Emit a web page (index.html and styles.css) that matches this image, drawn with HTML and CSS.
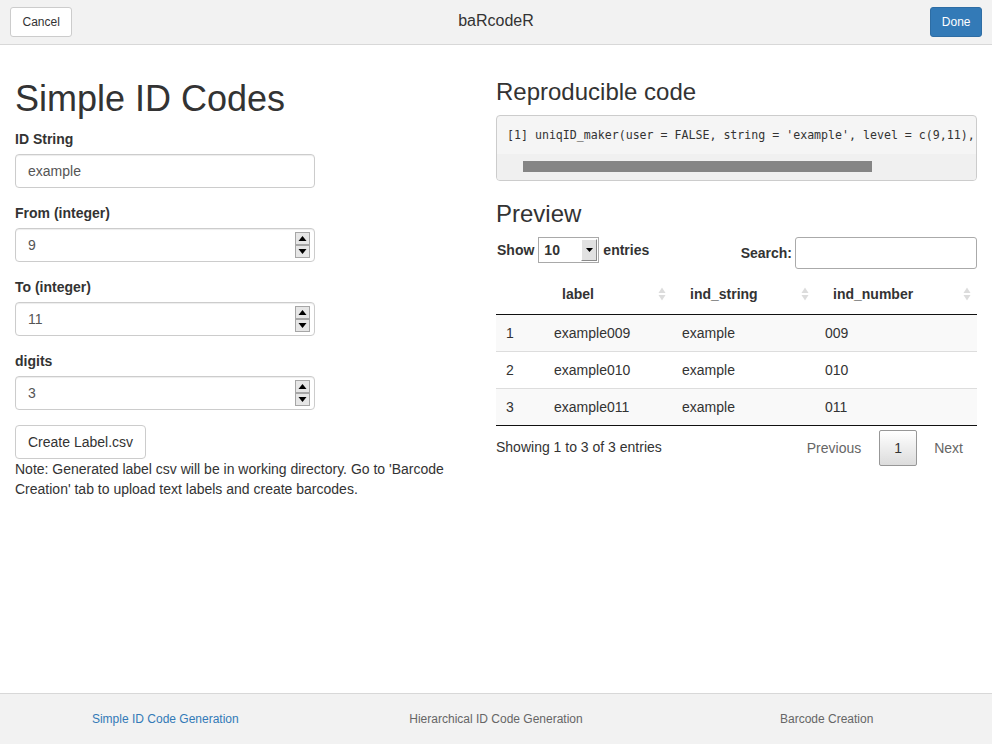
FILE: index.html
```html
<!DOCTYPE html>
<html>
<head>
<meta charset="utf-8">
<link rel="stylesheet" href="styles.css">
</head>
<body>
<div class="titlebar">
  <button class="btn btn-cancel">Cancel</button>
  <div class="title">baRcodeR</div>
  <button class="btn btn-done">Done</button>
</div>
<div class="content">
  <div class="left">
    <h1>Simple ID Codes</h1>
    <div class="form-group">
      <label class="lbl">ID String</label>
      <div class="input-wrap"><div class="input">example</div></div>
    </div>
    <div class="form-group">
      <label class="lbl">From (integer)</label>
      <div class="input-wrap"><div class="input">9</div>
        <svg class="spinner" width="15" height="26" viewBox="0 0 15 26"><rect x="0.5" y="0.5" width="14" height="12" fill="#e6e6e6" stroke="#a6a6a6"/><rect x="0.5" y="13.5" width="14" height="12" fill="#e6e6e6" stroke="#a6a6a6"/><polygon points="3.5,9 11.5,9 7.5,4" fill="#000"/><polygon points="3.5,17 11.5,17 7.5,22" fill="#000"/></svg>
      </div>
    </div>
    <div class="form-group">
      <label class="lbl">To (integer)</label>
      <div class="input-wrap"><div class="input">11</div>
        <svg class="spinner" width="15" height="26" viewBox="0 0 15 26"><rect x="0.5" y="0.5" width="14" height="12" fill="#e6e6e6" stroke="#a6a6a6"/><rect x="0.5" y="13.5" width="14" height="12" fill="#e6e6e6" stroke="#a6a6a6"/><polygon points="3.5,9 11.5,9 7.5,4" fill="#000"/><polygon points="3.5,17 11.5,17 7.5,22" fill="#000"/></svg>
      </div>
    </div>
    <div class="form-group">
      <label class="lbl">digits</label>
      <div class="input-wrap"><div class="input">3</div>
        <svg class="spinner" width="15" height="26" viewBox="0 0 15 26"><rect x="0.5" y="0.5" width="14" height="12" fill="#e6e6e6" stroke="#a6a6a6"/><rect x="0.5" y="13.5" width="14" height="12" fill="#e6e6e6" stroke="#a6a6a6"/><polygon points="3.5,9 11.5,9 7.5,4" fill="#000"/><polygon points="3.5,17 11.5,17 7.5,22" fill="#000"/></svg>
      </div>
    </div>
    <button class="btn btn-default">Create Label.csv</button>
    <div class="note">Note: Generated label csv will be in working directory. Go to 'Barcode Creation' tab to upload text labels and create barcodes.</div>
  </div>
  <div class="right">
    <h3 class="h3-first">Reproducible code</h3>
    <div class="pre">
      <div class="code-line">[1] uniqID_maker(user = FALSE, string = 'example', level = c(9,11),</div>
      <div class="hscroll"><div class="thumb"></div></div>
    </div>
    <h3 class="h3-preview">Preview</h3>
    <div class="dt-top">
      <div class="dt-length">Show <span class="select"><span class="select-val">10</span><span class="select-btn"><svg width="7" height="4" viewBox="0 0 7 4"><polygon points="0,0 7,0 3.5,4" fill="#000"/></svg></span></span> entries</div>
      <div class="dt-filter">Search:<span class="search"></span></div>
    </div>
    <table class="dt">
      <colgroup><col class="c0"><col class="c1"><col class="c2"><col class="c3"></colgroup>
      <thead>
        <tr>
          <th class="idx"></th>
          <th>label<svg class="sort" width="8" height="14" viewBox="0 0 8 14"><polygon points="0.5,6 7.5,6 4,0.5" fill="#dcdcdc"/><polygon points="0.5,8 7.5,8 4,13.5" fill="#dcdcdc"/></svg></th>
          <th>ind_string<svg class="sort" width="8" height="14" viewBox="0 0 8 14"><polygon points="0.5,6 7.5,6 4,0.5" fill="#dcdcdc"/><polygon points="0.5,8 7.5,8 4,13.5" fill="#dcdcdc"/></svg></th>
          <th>ind_number<svg class="sort" width="8" height="14" viewBox="0 0 8 14"><polygon points="0.5,6 7.5,6 4,0.5" fill="#dcdcdc"/><polygon points="0.5,8 7.5,8 4,13.5" fill="#dcdcdc"/></svg></th>
        </tr>
      </thead>
      <tbody>
        <tr class="odd"><td>1</td><td>example009</td><td>example</td><td>009</td></tr>
        <tr><td>2</td><td>example010</td><td>example</td><td>010</td></tr>
        <tr class="odd"><td>3</td><td>example011</td><td>example</td><td>011</td></tr>
      </tbody>
    </table>
    <div class="dt-bottom">
      <div class="dt-info">Showing 1 to 3 of 3 entries</div>
      <div class="dt-paginate">
        <span class="pg disabled">Previous</span>
        <span class="pg current">1</span>
        <span class="pg disabled pg-next">Next</span>
      </div>
    </div>
  </div>
</div>
<div class="tabstrip">
  <div class="tab active">Simple ID Code Generation</div>
  <div class="tab">Hierarchical ID Code Generation</div>
  <div class="tab">Barcode Creation</div>
</div>
</body>
</html>
```

FILE: styles.css
```css
* { box-sizing: border-box; }
html, body { margin: 0; padding: 0; }
body {
  width: 992px;
  height: 744px;
  overflow: hidden;
  font-family: "Liberation Sans", Arial, sans-serif;
  font-size: 14px;
  line-height: 20px;
  color: #333;
  background: #fff;
  display: flex;
  flex-direction: column;
}
.titlebar {
  height: 45px;
  flex: none;
  background: #f2f2f2;
  border-bottom: 1px solid #d8d8d8;
  display: flex;
  align-items: flex-start;
  justify-content: space-between;
  padding: 7px 10px 0 10px;
  position: relative;
}
.title {
  position: absolute;
  left: 0;
  right: 0;
  top: 11px;
  text-align: center;
  font-size: 16px;
  line-height: 20px;
  color: #333;
  pointer-events: none;
}
.btn {
  font-family: inherit;
  border: 1px solid #ccc;
  border-radius: 3px;
  background: #fff;
  color: #333;
  cursor: pointer;
  margin: 0;
}
.btn-cancel, .btn-done {
  font-size: 12px;
  line-height: 18px;
  padding: 5px 10px;
  height: 30px;
  position: relative;
  z-index: 1;
}
.btn-cancel { padding: 5px 11.5px; }
.btn-done {
  background: #337ab7;
  border-color: #2e6da4;
  color: #fff;
  padding: 5px 10.5px;
}
.content {
  flex: 1;
  display: grid;
  grid-template-columns: 481px 481px;
  padding: 14px 15px 0 15px;
}
h1 {
  font-size: 36px;
  font-weight: normal;
  line-height: 39.6px;
  margin: 20px 0 10px 0;
  color: #333;
}
h3 {
  font-size: 24px;
  font-weight: normal;
  line-height: 26.4px;
  margin: 0;
  color: #333;
}
.h3-first { margin: 20px 0 10px 0; }
.h3-preview { margin: 20px 0 10px 0; }
.form-group { margin-bottom: 15px; }
.lbl {
  display: block;
  font-weight: bold;
  margin-bottom: 5px;
}
.input-wrap {
  position: relative;
  width: 300px;
}
.input {
  height: 34px;
  padding: 6px 12px;
  border: 1px solid #ccc;
  border-radius: 4px;
  color: #555;
  background: #fff;
  box-shadow: inset 0 1px 1px rgba(0,0,0,0.075);
}
.spinner {
  position: absolute;
  right: 5px;
  top: 4px;
  display: block;
}
.btn-default {
  font-size: 14px;
  line-height: 20px;
  padding: 6px 12px;
  height: 34px;
  border-radius: 4px;
}
.note { width: 466px; }

.pre {
  border: 1px solid #ccc;
  border-radius: 4px;
  background: #f5f5f5;
  overflow: hidden;
}
.code-line {
  padding: 9.5px 10px;
  white-space: pre;
  overflow: hidden;
  font-family: "DejaVu Sans Mono", "Liberation Mono", monospace;
  font-size: 11.6px;
  line-height: 18.6px;
  color: #333;
}
.hscroll {
  height: 26px;
  background: #f0f0f0;
  padding: 7px 0 0 26px;
}
.thumb {
  width: 349px;
  height: 11px;
  background: #858585;
}
.dt-top {
  height: 37px;
  display: flex;
  justify-content: space-between;
  align-items: flex-start;
  padding-top: 0;
  font-weight: bold;
}
.dt-length {
  display: flex;
  align-items: center;
  height: 26px;
  padding-left: 1px;
  gap: 4px;
}
.select {
  display: inline-flex;
  width: 61px;
  height: 26px;
  border: 1px solid #a9a9a9;
  background: #fff;
  justify-content: space-between;
  align-items: stretch;
}
.select-val { padding: 2px 0 0 5px; line-height: 20px; }
.select-btn {
  width: 16px;
  margin: 1px;
  background: #e1e1e1;
  border-top: 1px solid #fff;
  border-left: 1px solid #fff;
  border-right: 1px solid #8a8a8a;
  border-bottom: 1px solid #8a8a8a;
  display: flex;
  align-items: center;
  justify-content: center;
}
.select-btn svg { display: block; }
.dt-filter {
  display: flex;
  align-items: center;
  height: 32px;
}
.search {
  display: block;
  width: 182px;
  height: 32px;
  margin-left: 3px;
  border: 1px solid #aaa;
  border-radius: 3px;
  background: #fff;
}
table.dt {
  width: 481px;
  border-collapse: collapse;
  table-layout: fixed;
}
.c0 { width: 48px; }
.c1 { width: 128px; }
.c2 { width: 143px; }
.c3 { width: 162px; }
.dt th {
  position: relative;
  text-align: left;
  font-weight: bold;
  padding: 10px 18px;
  line-height: 20px;
  border-bottom: 1px solid #111;
}
.sort {
  position: absolute;
  right: 6px;
  top: 13px;
  display: block;
}
.dt td {
  padding: 8px 10px;
  line-height: 20px;
  border-top: 1px solid #ddd;
}
.dt tbody tr:first-child td { border-top: none; }
.dt tbody tr:last-child td { border-bottom: 1px solid #111; }
.dt tr.odd td { background: #f9f9f9; }
.dt-bottom {
  display: flex;
  justify-content: space-between;
  align-items: flex-start;
}
.dt-info { padding-top: 11px; }
.dt-paginate {
  padding-top: 4px;
  display: flex;
}
.pg {
  display: block;
  padding: 7px 14px;
  line-height: 20px;
  border: 1px solid transparent;
  border-radius: 2px;
  margin-left: 2px;
  color: #666;
}
.pg-next { padding: 7px 13px 7px 14px; }
.pg.current {
  color: #333;
  border-color: #979797;
  background: linear-gradient(to bottom, #fff 0%, #dcdcdc 100%);
  padding: 7px 13px;
  min-width: 38px;
  text-align: center;
  margin-left: 3px;
  margin-right: 0;
}
.tabstrip {
  height: 51px;
  flex: none;
  background: #f2f2f2;
  border-top: 1px solid #d8d8d8;
  display: grid;
  grid-template-columns: 1fr 1fr 1fr;
  align-items: center;
}
.tab {
  text-align: center;
  font-size: 12px;
  line-height: 16px;
  color: #666;
}
.tab.active { color: #337ab7; }
```
